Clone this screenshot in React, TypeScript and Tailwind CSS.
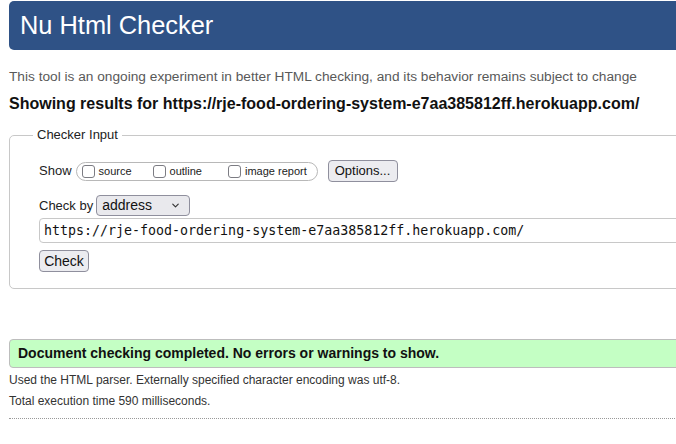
import { ChevronDown } from "lucide-react";

function Box({ label, className = "" }: { label: string; className?: string }) {
  return (
    <label className={`flex items-center gap-[4px] ${className}`}>
      <span className="block w-[13px] h-[13px] rounded-[3px] border border-[#7c7c83] bg-white" />
      <span className="text-[11px] leading-[13px] text-[#222]">{label}</span>
    </label>
  );
}

export default function App() {
  const url = "https://rje-food-ordering-system-e7aa385812ff.herokuapp.com/";

  return (
    <div className="w-[676px] h-[444px] overflow-hidden bg-white pl-[9px] pt-px font-['Liberation_Sans',Arial,sans-serif] text-[#111]">
      <div className="w-[720px]">
        <h1 className="h-[49px] flex items-center pl-[11px] rounded-l-[5px] bg-[#2f5286] text-white text-[25.4px]">
          Nu Html Checker
        </h1>

        <p className="mt-[19px] text-[13.7px] leading-[16px] text-[#595959]">
          This tool is an ongoing experiment in better HTML checking, and its behavior remains subject to change
        </p>
        <p className="mt-[9px] text-[16px] leading-[19px] font-bold text-[#111]">
          Showing results for {url}
        </p>

        <fieldset className="mt-[14px] border border-[#c8c8c8] rounded-l-[5px] pl-[29px] pr-0 pt-[17px] pb-[15px]">
          <legend className="ml-[-6px] px-[4px] text-[13px] leading-[16px] text-[#222]">Checker Input</legend>

          <div className="flex items-center h-[22px]">
            <span className="text-[13px] text-[#222]">Show</span>
            <div className="ml-[4px] flex items-center h-[19px] w-[242px] rounded-full border border-[#b8b8b8] pl-[5px]">
              <Box label="source" />
              <Box label="outline" className="ml-[21px]" />
              <Box label="image report" className="ml-[26px]" />
            </div>
            <button className="ml-[10px] h-[22px] w-[70px] rounded-[4px] border border-[#8f8f9d] bg-[#ececf0] text-[13px] text-[#111]">
              Options...
            </button>
          </div>

          <div className="mt-[13px] flex items-center h-[21px]">
            <span className="text-[13px] text-[#222]">Check by</span>
            <div className="ml-[3px] flex items-center justify-between h-[21px] w-[94px] rounded-[4px] border border-[#8f8f9d] bg-[#e9e9ed] pl-[5px] pr-[8px]">
              <span className="text-[14px] text-[#111]">address</span>
              <ChevronDown size={11} strokeWidth={2.5} className="text-[#333]" />
            </div>
          </div>

          <div className="mt-[2px] h-[25px] flex items-center border border-[#c8c8c8] rounded-l-[4px] pl-[4px] bg-white">
            <span className="font-['DejaVu_Sans_Mono',monospace] text-[13.3px] text-[#111]">{url}</span>
          </div>

          <button className="mt-[7px] h-[22px] w-[50px] rounded-[4px] border border-[#8f8f9d] bg-[#ececf0] text-[14px] text-[#111]">
            Check
          </button>
        </fieldset>

        <div className="mt-[50px] h-[29px] flex items-center pl-[8px] rounded-l-[4px] border border-[#bdbdbd] bg-[#c4ffc4]">
          <span className="text-[14px] font-bold text-[#111]">
            Document checking completed. No errors or warnings to show.
          </span>
        </div>

        <div className="border-b border-dotted border-[#999] pb-[7px]">
          <p className="mt-[2px] text-[12px] leading-[20px] text-[#333]">
            Used the HTML parser. Externally specified character encoding was utf-8.
          </p>
          <p className="mt-px text-[12px] leading-[20px] text-[#333]">Total execution time 590 milliseconds.</p>
        </div>
      </div>
    </div>
  );
}
